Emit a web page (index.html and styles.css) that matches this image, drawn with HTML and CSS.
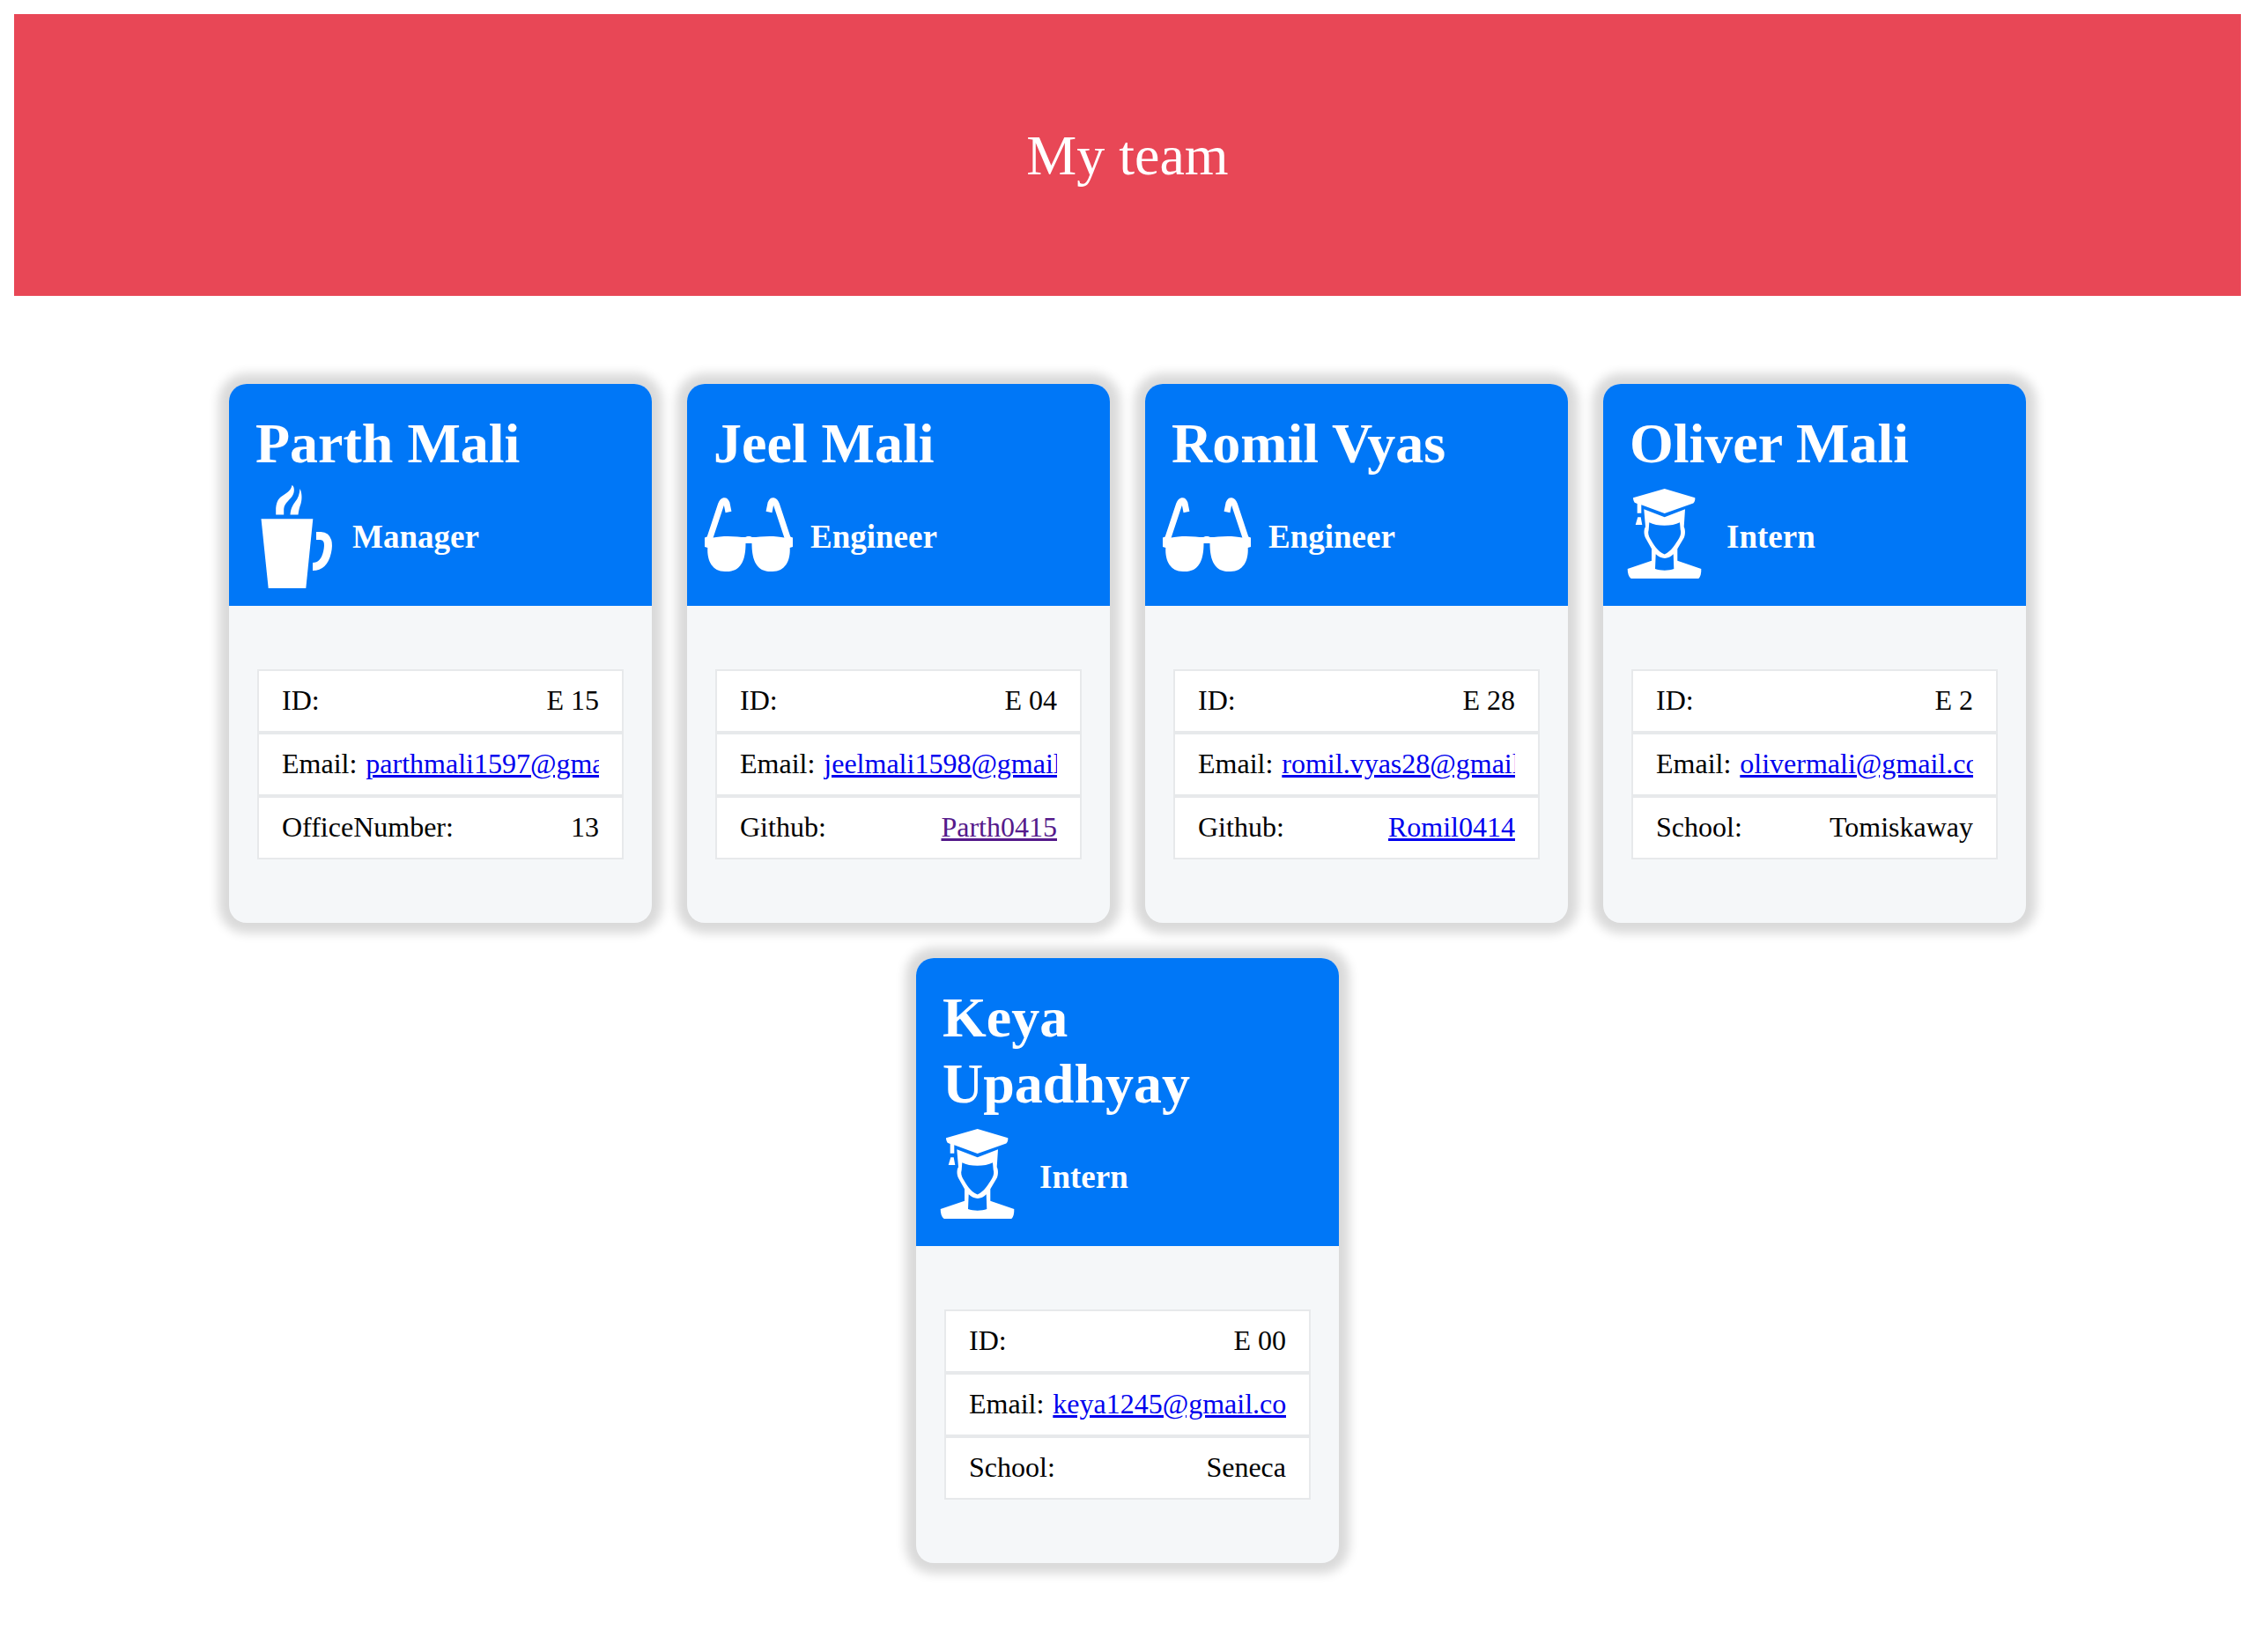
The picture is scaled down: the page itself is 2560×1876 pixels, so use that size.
FILE: index.html
```html
<!DOCTYPE html>
<html lang="en">
<head>
<meta charset="utf-8">
<meta name="viewport" content="width=device-width, initial-scale=1">
<title>My team</title>
<link rel="stylesheet" href="styles.css">
</head>
<body>
<svg class="sprite" aria-hidden="true">
  <symbol id="mug" viewBox="0 0 100 118">
    <path d="M16.5 39.3H75.3L67.3 118H24.7Z"/>
    <path d="M33.2 34.5V27C34 20 36 16 40 13.500C45 10 50 8 51.500 1C54 2 54.500 7 53 11C50 18 43 20 42.200 28V34.500Z"/>
    <path d="M49.500 34.500C50 28 52 24 55 20C58.500 16 60 11 60.500 5C63 10 63 17 61.500 22C60 26 59 30 58.500 34.500Z"/>
    <path class="line" stroke-width="9" d="M79 58.500H84C93 59 93.500 68 91.500 77C89 88 84 93.500 75 93.500"/>
  </symbol>
  <symbol id="glasses" viewBox="0 0 100 118">
    <path d="M0 60.500 3 59.500C6 62 12 59.500 22 59C32 58.500 40 60 46 60C48 58.500 52 58.500 54 60C60 60 68 58.500 78 59C88 59.500 94 62 97 59.500L100 60.500V71L96.700 72C97.500 87 91 99 77 99C60 100 53.500 88 53.500 67H46.500C46.500 88 40 100 23 99C9 99 2.500 87 3.300 72L0 71Z"/>
    <path class="line" stroke-width="7" d="M5.500 62 18.500 23C20.500 17.500 23.500 17.500 25 21.500L27 31.500M94.500 62 81.500 23C79.500 17.500 76.500 17.500 75 21.500L73 31.500"/>
  </symbol>
  <symbol id="graduate" viewBox="7 0 100 118">
    <path d="M21 15.300 56.700 5 91.300 15.300C91.500 18 91 20 89.300 21.500L56.700 33 30.300 23.300V32.700H25.700V22L22.700 20.700C21.500 19 21 17 21 15.300Z"/>
    <path d="M26.300 37.300H29.700L31.300 46H23.700Z"/>
    <path fill-rule="evenodd" d="M33.300 28.300 56.700 37.300 80 28.300 78.700 48.300C80.300 51 80.500 57 78.700 60.700L71.300 73.300V86.700L98.300 96C98.500 101 97.500 105 95.300 107H18.700C16 105 14.700 101 14.700 96L42 86.700V73.300L35 60.700C33 57 33 51 35 48.300ZM39.300 43.300 38.700 51.500C37.500 55 38.500 58.500 40.500 62C44 68 48.500 76 56.700 79.500C64.500 76 69 68 73.300 61C75.500 57 75.500 54 74.700 51.500L74 43.300C65 48 48 48 39.300 43.300ZM46.700 79.300 46 96C52 98.300 61.500 98.300 67.300 96L66.700 79.300C61 85.500 53 85.500 46.700 79.300Z"/>
  </symbol>
</svg>

<header class="banner">My team</header>

<main class="team">
  <article class="card">
    <header class="card-header">
      <h1 class="name">Parth Mali</h1>
      <div class="role"><svg class="icon" aria-hidden="true"><use href="#mug"/></svg><h3 class="title">Manager</h3></div>
    </header>
    <ul class="details">
      <li class="row"><span>ID:</span><span class="value">E 15</span></li>
      <li class="row"><span>Email:</span><a class="value" href="mailto:parthmali1597@gmail.com">parthmali1597@gmail.com</a></li>
      <li class="row"><span>OfficeNumber:</span><span class="value">13</span></li>
    </ul>
  </article>

  <article class="card">
    <header class="card-header">
      <h1 class="name">Jeel Mali</h1>
      <div class="role"><svg class="icon" aria-hidden="true"><use href="#glasses"/></svg><h3 class="title">Engineer</h3></div>
    </header>
    <ul class="details">
      <li class="row"><span>ID:</span><span class="value">E 04</span></li>
      <li class="row"><span>Email:</span><a class="value" href="mailto:jeelmali1598@gmail.com">jeelmali1598@gmail.com</a></li>
      <li class="row"><span>Github:</span><a class="value seen" href="https://github.com/Parth0415">Parth0415</a></li>
    </ul>
  </article>

  <article class="card">
    <header class="card-header">
      <h1 class="name">Romil Vyas</h1>
      <div class="role"><svg class="icon" aria-hidden="true"><use href="#glasses"/></svg><h3 class="title">Engineer</h3></div>
    </header>
    <ul class="details">
      <li class="row"><span>ID:</span><span class="value">E 28</span></li>
      <li class="row"><span>Email:</span><a class="value" href="mailto:romil.vyas28@gmail.com">romil.vyas28@gmail.com</a></li>
      <li class="row"><span>Github:</span><a class="value" href="https://github.com/Romil0414">Romil0414</a></li>
    </ul>
  </article>

  <article class="card">
    <header class="card-header">
      <h1 class="name">Oliver Mali</h1>
      <div class="role"><svg class="icon" aria-hidden="true"><use href="#graduate"/></svg><h3 class="title">Intern</h3></div>
    </header>
    <ul class="details">
      <li class="row"><span>ID:</span><span class="value">E 2</span></li>
      <li class="row"><span>Email:</span><a class="value" href="mailto:olivermali@gmail.com">olivermali@gmail.com</a></li>
      <li class="row"><span>School:</span><span class="value">Tomiskaway</span></li>
    </ul>
  </article>

  <article class="card">
    <header class="card-header">
      <h1 class="name">Keya Upadhyay</h1>
      <div class="role"><svg class="icon" aria-hidden="true"><use href="#graduate"/></svg><h3 class="title">Intern</h3></div>
    </header>
    <ul class="details">
      <li class="row"><span>ID:</span><span class="value">E 00</span></li>
      <li class="row"><span>Email:</span><a class="value" href="mailto:keya1245@gmail.com">keya1245@gmail.com</a></li>
      <li class="row"><span>School:</span><span class="value">Seneca</span></li>
    </ul>
  </article>
</main>
</body>
</html>
```

FILE: styles.css
```css
* {
  box-sizing: border-box;
}

body {
  margin: 16px;
  background: #fff;
  color: #000;
  font-family: "Liberation Serif", "Times New Roman", serif;
  font-size: 32px;
}

.sprite {
  display: none;
}

.banner {
  display: flex;
  align-items: center;
  justify-content: center;
  min-height: 320px;
  padding-top: 2px;
  background: #e84756;
  color: #fff;
  font-size: 64px;
}

.team {
  display: flex;
  flex-wrap: wrap;
  align-items: flex-start;
  justify-content: center;
  gap: 40px;
  padding: 100px 0 84px;
}

.card {
  width: 480px;
  max-width: 100%;
  border-radius: 20px;
  background: #f5f7f9;
  box-shadow: 0 0 12px 12px rgba(0, 0, 0, 0.15);
}

.card-header {
  padding: 30px 20px 20px;
  border-radius: 20px 20px 0 0;
  background: #0077f7;
  color: #fff;
}

.name {
  margin: 0;
  padding: 0 10px;
  font-size: 64px;
  line-height: 75px;
}

.role {
  display: flex;
  align-items: center;
  gap: 20px;
  padding-top: 9px;
}

.icon {
  flex: none;
  width: 100px;
  height: 118px;
  fill: #fff;
}

.line {
  fill: none;
  stroke: #fff;
}

.title {
  margin: 0;
  font-size: 37px;
}

.details {
  margin: 0;
  padding: 72px 32px;
  list-style: none;
}

.row {
  display: flex;
  align-items: center;
  justify-content: space-between;
  gap: 10px;
  height: 72px;
  padding: 0 26px 2px;
  border: 2px solid #e7e9eb;
  background: #fff;
}

.value {
  overflow: hidden;
  white-space: nowrap;
}

a {
  color: #0000ee;
}

a.seen {
  color: #551a8b;
}
```
